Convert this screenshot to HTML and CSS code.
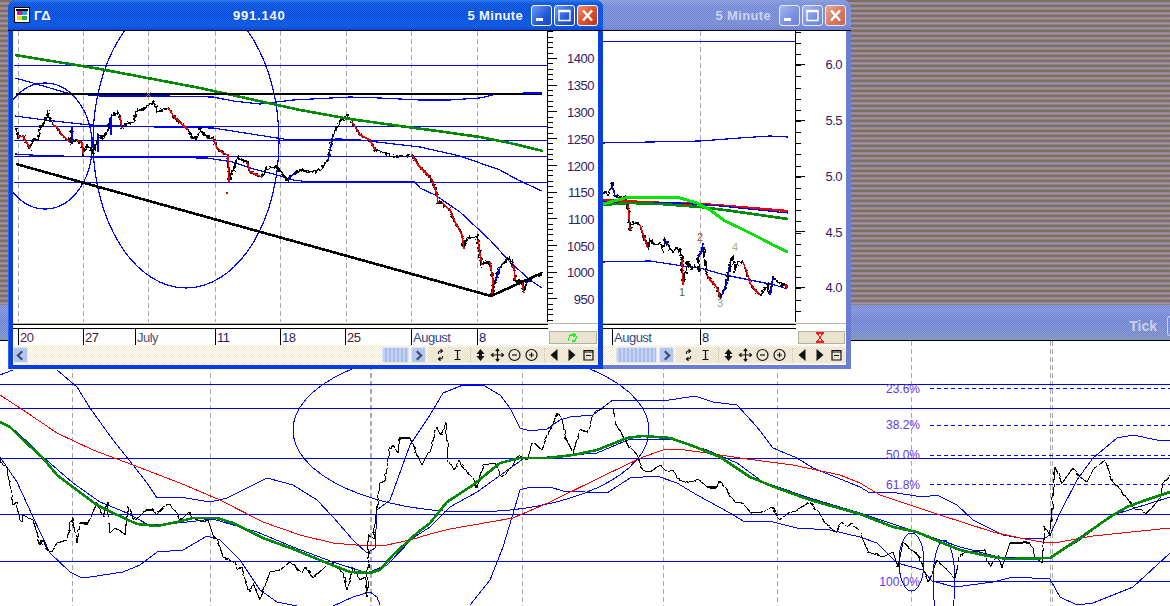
FILE: index.html
```html
<!DOCTYPE html>
<html lang="en">
<head>
<meta charset="utf-8">
<title>Charts</title>
<link rel="stylesheet" href="styles.css">
</head>
<body>
<svg class="sprite" xmlns="http://www.w3.org/2000/svg">
  <defs>
    <filter id="jag" x="-5%" y="-5%" width="110%" height="110%" color-interpolation-filters="sRGB">
      <feTurbulence type="fractalNoise" baseFrequency="0.4" numOctaves="1" seed="3"/>
      <feDisplacementMap in="SourceGraphic" scale="6" xChannelSelector="R" yChannelSelector="G"/>
    </filter>
    <filter id="jag-fine" x="-2%" y="-5%" width="104%" height="110%" color-interpolation-filters="sRGB">
      <feTurbulence type="fractalNoise" baseFrequency="0.14" numOctaves="1" seed="7"/>
      <feDisplacementMap in="SourceGraphic" scale="4" xChannelSelector="R" yChannelSelector="G"/>
    </filter>
  </defs>
  <symbol id="i-sync" viewBox="0 0 14 14"><path d="M5 6V4.5Q5 3 7 3h1M7 1.2L9 3 7 4.8M9 8v1.5Q9 11 7 11H6M7 9.2L5 11l2 1.8"/></symbol>
  <symbol id="i-cursor" viewBox="0 0 14 14"><path d="M4 2.5h6M7 2.5v9M4 11.5h6"/></symbol>
  <symbol id="i-updown" viewBox="0 0 14 14"><polygon class="solid" points="7,1 11,6 8.5,6 8.5,8 11,8 7,13 3,8 5.5,8 5.5,6 3,6"/></symbol>
  <symbol id="i-move" viewBox="0 0 14 14"><path d="M7 1v12M1 7h12M5.3 3L7 1l1.7 2M5.3 11L7 13l1.7-2M3 5.3L1 7l2 1.7M11 5.3L13 7l-2 1.7"/></symbol>
  <symbol id="i-minus" viewBox="0 0 14 14"><circle cx="7" cy="7" r="5.5"/><path d="M4.5 7h5"/></symbol>
  <symbol id="i-plus" viewBox="0 0 14 14"><circle cx="7" cy="7" r="5.5"/><path d="M4.5 7h5M7 4.5v5"/></symbol>
  <symbol id="i-left" viewBox="0 0 14 14"><polygon class="solid" points="10,1 10,13 3,7"/></symbol>
  <symbol id="i-right" viewBox="0 0 14 14"><polygon class="solid" points="4,1 4,13 11,7"/></symbol>
  <symbol id="i-box" viewBox="0 0 14 14"><path d="M2.5 2.5h9v9.5h-9zM2.5 4h9M4.5 7.5h5"/></symbol>
  <symbol id="i-winmin" viewBox="0 0 19 19"><rect class="glyph" x="4" y="12" width="7" height="3"/></symbol>
  <symbol id="i-winmax" viewBox="0 0 19 19"><path class="glyph-line" d="M4 4.5h11v10H4zM4 5.5h11"/></symbol>
  <symbol id="i-winclose" viewBox="0 0 19 19"><path class="glyph-x" d="M5 4.5l9 10M14 4.5l-9 10"/></symbol>
</svg>

<div class="desktop">
  <div class="wallpaper"></div>
  <div class="backbar"><span class="backbar-label">Tick</span><span class="backbar-btn"></span></div>
  <svg class="chart back-chart" viewBox="0 341 1170 265" xmlns="http://www.w3.org/2000/svg">
    <path class="grid" d="M72.5 341V606M210.5 341V606M370.5 341V606M371.5 341V606M522.5 341V606M663.5 341V606M777.5 341V606M911.5 341V606M1050.5 341V606M1052.5 341V606"/>
    <path class="hline" d="M0 384.5H1170M0 408.5H1170M0 458.5H1170M0 514.5H1170M0 561.5H1170M932 581.5H1170"/>
    <path class="fib" d="M930 388.5H1170M930 425.5H1170M930 455.5H1170M930 484.5H1170"/>
    <ellipse class="thin-blue" cx="471" cy="430" rx="178" ry="82"/>
    <ellipse class="thin-blue" cx="911.5" cy="562" rx="12.5" ry="29"/>
    <ellipse class="thin-blue" cx="944" cy="582" rx="11" ry="42"/>
    <polyline class="thin-blue" points="0,375 13,370"/>
    <polyline class="thin-blue" points="57,370 77,387 90,408 113,440 133,465 147,483 157,498 180,497 210,502 227,498 267,478 293,485 317,500 333,517 353,540 367,553 375,548 377,510 390,500 410,445 430,415 443,393 463,385 483,385 500,395 510,408 520,428 530,431 547,429 560,420 570,417 593,415 613,400 630,400 663,401 695,396 713,402 737,405 757,427 773,448 797,458 813,468 860,487 870,493 890,492 923,497 937,495 957,505 973,520 1003,535 1020,538 1045,538 1050,535 1060,513 1077,480 1093,458 1117,438 1133,435 1157,440 1170,441"/>
    <polyline class="thin-blue" points="0,421 17,432 43,457 73,483 100,502 127,513 147,524 167,524 187,522 213,519 257,532 293,547 333,562 367,573 387,565 413,538 430,527 450,507 477,492 523,459 547,457 597,453 630,439 670,439 707,450 737,463 763,482 810,498 860,513 917,532 960,547 1003,558 1050,557 1077,542 1113,515 1170,497"/>
    <polyline class="thin-blue" points="0,457 17,482 33,517 50,553 70,572 80,577 90,577 123,572 140,565 157,552 183,550 207,536 220,540 240,560 260,590 277,602 297,606"/>
    <polyline class="thin-blue" points="333,606 353,597 370,592 377,597 380,605"/>
    <polyline class="thin-blue" points="470,605 490,580 503,547 512,517 520,490 530,487 550,487 563,491 607,493 630,478 657,476 677,483 697,495 730,513 743,521 773,522 797,528 830,530 860,537 877,543 897,563 923,570 932,581 955,587 993,582 1013,577 1050,579 1060,597 1077,605 1093,603 1133,587 1170,553"/>
    <polyline class="thin-red" points="0,395 23,410 57,433 93,450 133,465 180,483 220,500 263,522 300,535 333,543 367,546 387,545 410,540 430,534 450,529 513,518 550,502 603,476 643,457 663,450 677,449 707,453 747,459 793,465 840,475 860,483 880,495 910,505 940,515 993,532 1020,538 1047,543 1060,542 1093,536 1170,528"/>
    <polyline class="thin-black" filter="url(#jag-fine)" points="0,457 3,465 7,467 10,487 13,505 17,502 20,520 22,522 23,515 33,520 37,533 40,545 43,540 50,553 57,543 67,540 72,517 77,543 80,523 88,523 97,503 103,517 107,503 110,533 115,528 125,535 128,507 133,518 138,520 145,510 153,510 157,515 163,507 170,505 177,513 180,520 190,513 193,518 203,522 208,520 213,535 220,547 223,557 235,562 238,570 242,567 245,580 250,592 253,583 260,600 270,572 280,570 290,562 302,573 305,567 313,578 325,567 330,562 343,573 347,590 353,567 360,580 365,577 367,598 369,535 373,540 380,483 385,480 390,450 393,445 398,452 400,438 410,438 415,450 422,465 428,453 430,452 437,427 442,435 446,423 448,460 453,470 460,460 467,473 473,477 477,488 483,465 495,463 502,477 512,467 518,455 527,460 533,442 542,450 548,435 557,413 562,420 565,435 573,453 580,430 587,433 593,415 600,408 613,410 618,428 630,448 638,457 643,470 650,472 660,465 667,472 673,470 677,478 690,483 698,479 707,487 717,487 719,480 730,495 735,502 743,503 751,513 763,512 772,507 780,520 790,513 800,508 810,502 822,517 835,533 842,522 847,527 852,523 860,532 868,552 883,557 893,552 898,567 903,542 920,557 928,583 937,560 955,578 960,557 967,552 985,550 990,567 997,555 1002,567 1010,543 1025,543 1030,543 1035,557 1042,563 1045,527 1050,535 1055,467 1062,483 1073,468 1080,477 1087,482 1093,470 1105,460 1113,482 1127,498 1133,507 1147,514 1160,498 1163,483 1170,475"/>
    <polyline class="thick-green" points="0,422 10,427 23,440 42,457 57,475 73,487 97,505 113,513 137,524 157,526 177,522 193,518 217,518 233,523 263,538 293,549 327,563 350,572 370,573 380,570 393,555 417,533 430,523 447,502 473,485 500,463 520,458 547,458 573,455 597,450 627,438 643,436 670,438 693,446 720,457 750,477 777,488 810,500 860,514 893,527 917,532 940,542 960,550 983,555 1007,559 1050,558 1077,540 1110,517 1127,507 1143,501 1170,492"/>
    <g class="fib-labels">
      <text x="920" y="393">23.6%</text>
      <text x="920" y="429">38.2%</text>
      <text x="920" y="459">50.0%</text>
      <text x="920" y="489">61.8%</text>
      <text x="920" y="586">100.0%</text>
    </g>
  </svg>

  <section class="window window-inactive">
    <header class="titlebar">
      <span class="title-period">5 Minute</span>
      <div class="title-buttons">
        <span class="winbtn"><svg><use href="#i-winmin"/></svg></span>
        <span class="winbtn"><svg><use href="#i-winmax"/></svg></span>
        <span class="winbtn winbtn-close"><svg><use href="#i-winclose"/></svg></span>
      </div>
    </header>
    <svg class="chart plot" viewBox="595 31 251 314" xmlns="http://www.w3.org/2000/svg">
      <path class="grid" d="M700.5 31V322"/>
      <path class="hline" d="M595 41.5H795"/>
      <polyline class="wide-blue" points="600,143 700,141 740,138 770,136 788,137"/>
      <polyline class="wide-blue" points="600,262 650,261 670,264 683,266 700,268 725,275 745,279 760,282 775,285 787,289"/>
      <polyline class="thick-black" filter="url(#jag)" points="595,192 604,192 608,194 612,185 615,196 625,198 628,205 629,215 630,230 633,222 640,225 645,240 648,248 650,240 655,245 660,243 663,250 665,240 668,245 672,252 678,248 680,250 682,260 683,285 685,275 688,262 692,270 695,265 700,272 698,258 702,250 703,243 705,262 707,275 710,280 715,285 718,290 720,298 722,295 724,290 726,285 730,265 733,257 735,270 738,262 743,262 746,270 750,283 755,290 760,295 763,292 767,285 770,295 773,278 778,282 782,285 785,285 788,288"/>
      <path class="thick-red" d="M628 205L629 215 630 230M640 225L645 240 648 248M682 260L683 285M707 275L710 280 715 285 718 290 720 298M743 262L746 270 750 283 755 290 760 295M785 285L788 288"/>
      <path class="thick-blue" d="M612 185L615 196M665 240L668 245M698 258L702 250 703 243M722 295L724 290 726 285 730 265M770 295L773 278"/>
      <polyline class="band-red" points="600,200 665,203 700,204 715,205 788,211"/>
      <polyline class="wide-blue" points="600,202 680,203 720,206 788,213"/>
      <polyline class="thick-green" points="600,205 630,203 660,204 700,207 725,210 788,219"/>
      <polyline class="thick-lime" points="600,205 625,198 650,197 680,198 697,203 710,210 725,221 740,228 760,238 775,246 788,252"/>
      <path class="axis" d="M795.5 31V322"/>
      <line class="tick-minor" x1="798" y1="31.7" x2="798" y2="322"/>
      <line class="tick-major" x1="800" y1="64" x2="800" y2="322"/>
      <g class="axis-labels">
        <text x="842" y="69">6.0</text>
        <text x="842" y="125">5.5</text>
        <text x="842" y="181">5.0</text>
        <text x="842" y="237">4.5</text>
        <text x="842" y="292">4.0</text>
      </g>
      <text class="mark mark-olive" x="679" y="296">1</text>
      <text class="mark mark-rust" x="697" y="241">2</text>
      <text class="mark mark-grey" x="717" y="307">3</text>
      <text class="mark mark-tan" x="732" y="251">4</text>
      <path class="rule-grey" d="M595 323.5H846"/>
      <path class="rule" d="M595 324.5H796M595 328.5H796M612.5 328V345M700.5 328V345"/>
      <text class="date date-blue" x="614" y="342">August</text>
      <text class="date date-navy" x="702" y="342">8</text>
      <rect class="status" x="798.5" y="331.5" width="46" height="12"/>
      <path class="hourglass" d="M816 333h8M816 342h8M817 333l6 9M823 333l-6 9"/>
    </svg>
    <div class="scrollrow">
      <span class="scrollbtn scrollbtn-hidden"></span>
      <span class="track"></span>
      <span class="thumb thumb-wide"></span>
      <span class="scrollbtn"><i class="chev chev-right"></i></span>
      <div class="toolbar">
        <div class="tool-group"><svg class="tool"><use href="#i-sync"/></svg><svg class="tool"><use href="#i-cursor"/></svg></div>
        <div class="tool-group"><svg class="tool"><use href="#i-updown"/></svg><svg class="tool"><use href="#i-move"/></svg><svg class="tool"><use href="#i-minus"/></svg><svg class="tool"><use href="#i-plus"/></svg></div>
        <div class="tool-group"><svg class="tool"><use href="#i-left"/></svg><svg class="tool"><use href="#i-right"/></svg><svg class="tool"><use href="#i-box"/></svg></div>
      </div>
    </div>
  </section>

  <section class="window window-active">
    <header class="titlebar">
      <svg class="appicon" viewBox="0 0 16 16" xmlns="http://www.w3.org/2000/svg">
        <rect x="0.5" y="0.5" width="15" height="15" fill="#fff" stroke="#000"/>
        <rect x="2" y="2" width="12" height="1.5" fill="#000"/>
        <rect x="3" y="4" width="5" height="4" fill="#e0109a"/>
        <rect x="8" y="4" width="5" height="4" fill="#20a0e0"/>
        <rect x="3" y="9" width="5" height="4" fill="#e8d810"/>
        <rect x="8" y="9" width="5" height="4" fill="#20b040"/>
      </svg>
      <span class="title-name">ΓΔ</span>
      <span class="title-value">991.140</span>
      <span class="title-period">5 Minute</span>
      <div class="title-buttons">
        <span class="winbtn"><svg><use href="#i-winmin"/></svg></span>
        <span class="winbtn"><svg><use href="#i-winmax"/></svg></span>
        <span class="winbtn winbtn-close"><svg><use href="#i-winclose"/></svg></span>
      </div>
    </header>
    <svg class="chart plot" viewBox="13 31 585 314" xmlns="http://www.w3.org/2000/svg">
      <path class="grid" d="M18.5 31V322M83.5 31V322M148.5 31V322M215.5 31V322M280.5 31V322M346.5 31V322M411.5 31V322M477.5 31V322"/>
      <path class="hline" d="M14 65.5H547M14 126.5H547M14 140.5H547M14 156.5H547M14 182.5H547"/>
      <ellipse class="wide-blue" cx="45" cy="146" rx="47" ry="63"/>
      <ellipse class="wide-blue" cx="186" cy="141" rx="93" ry="147"/>
      <polyline class="wide-blue" points="15,78 33,83 67,93 100,96 165,96 213,97 233,101 260,104 293,100 350,97 380,98 420,100 450,100 480,98 497,94"/>
      <polyline class="wide-blue" points="15,116 45,120 90,125 157,127 213,128 277,138 290,140 340,139 360,140 420,147 460,156 500,170 518,180 542,191"/>
      <polyline class="wide-blue" points="15,154 30,155 60,156 93,157 207,158 233,162 250,168 277,175 293,180 310,182 415,182 420,188 435,195 460,212 490,240 510,262 530,280 542,288"/>
      <polyline class="thick-black" filter="url(#jag)" points="16,128 18,137 23,136 26,142 30,148 33,139 38,140 40,128 45,122 48,113 50,120 53,125 57,127 62,135 70,142 72,127 72,142 77,140 82,143 83,153 87,145 93,152 98,135 102,138 108,132 111,117 117,112 120,117 122,128 127,123 133,123 137,110 143,110 148,105 155,103 157,112 163,110 168,108 175,118 183,125 188,130 192,137 197,138 200,130 207,137 213,138 217,148 223,153 228,155 229,182 232,172 238,158 247,162 250,172 262,177 267,168 277,167 287,180 295,173 300,170 310,172 320,170 328,160 333,135 340,122 347,115 352,122 360,135 370,140 375,150 385,153 395,157 412,155 418,165 428,175 432,180 437,195 438,203 442,203 450,210 452,215 455,222 462,235 464,249 466,240 470,237 474,238 477,236 478,240 480,255 482,265 486,262 490,262 493,280 492,296 495,282 500,267 505,262 507,260 510,258 512,265 514,268 515,280 518,283 520,280 522,282 524,293 526,283 530,280 535,276 542,273"/>
      <path class="thick-red" d="M18 137L23 136 26 142 30 148M53 125L57 127 62 135 70 142M77 140L82 143 83 153M120 117L122 128M168 108L175 118 183 125 188 130M213 138L217 148 223 153 228 155 229 182M247 162L250 172 262 177M352 122L360 135 370 140 375 150M412 155L418 165 428 175 432 180 437 195 438 203M442 203L450 210 452 215 455 222 462 235 464 249M478 240L480 255 482 265M490 262L493 280 492 296M512 265L514 268 515 280M522 282L524 293"/>
      <path class="thick-blue" d="M72 127L72 142M98 135L98 152M111 117L111 135M287 180L295 173M328 160L333 135M495 282L500 267M526 283L530 280"/>
      <path class="red-dot" d="M226 192h2v2h-2z"/>
      <polyline class="thick-green" points="15,55 100,69 200,88 300,110 350,119 400,126 430,130 480,137 510,143 543,151"/>
      <path class="heavy-black" d="M16 94H542M16 164L491 296L542 273"/>
      <polyline class="wide-blue" points="523,93 542,93"/>
      <path class="mark-x" d="M146 92l5 5M151 92l-5 5"/>
      <path class="axis" d="M547.5 31V322"/>
      <line class="tick-minor" x1="550" y1="31.3" x2="550" y2="322"/>
      <line class="tick-major" x1="552" y1="58" x2="552" y2="322"/>
      <g class="axis-labels">
        <text x="594" y="63">1400</text>
        <text x="594" y="90">1350</text>
        <text x="594" y="117">1300</text>
        <text x="594" y="144">1250</text>
        <text x="594" y="171">1200</text>
        <text x="594" y="197">1150</text>
        <text x="594" y="224">1100</text>
        <text x="594" y="251">1050</text>
        <text x="594" y="277">1000</text>
        <text x="594" y="304">950</text>
      </g>
      <path class="rule-grey" d="M13 323.5H598"/>
      <path class="rule" d="M13 324.5H548M13 328.5H548M18.5 328V345M83.5 328V345M135.5 328V345M215.5 328V345M280.5 328V345M345.5 328V345M411.5 328V345M477.5 328V345"/>
      <text class="date date-maroon" x="20" y="342">20</text>
      <text class="date date-dark" x="85" y="342">27</text>
      <text class="date date-slate" x="137" y="342">July</text>
      <text class="date date-navy" x="217" y="342">11</text>
      <text class="date date-purple" x="282" y="342">18</text>
      <text class="date date-dark" x="347" y="342">25</text>
      <text class="date date-blue" x="413" y="342">August</text>
      <text class="date date-navy" x="479" y="342">8</text>
      <rect class="status" x="549.5" y="331.5" width="47" height="12"/>
      <path class="signal" d="M568 341l2-6h4M573 333l3 2-3 2M572 341h3l2-5"/>
    </svg>
    <div class="scrollrow">
      <span class="scrollbtn"><i class="chev chev-left"></i></span>
      <span class="track"></span>
      <span class="thumb"></span>
      <span class="scrollbtn"><i class="chev chev-right"></i></span>
      <div class="toolbar">
        <div class="tool-group"><svg class="tool"><use href="#i-sync"/></svg><svg class="tool"><use href="#i-cursor"/></svg></div>
        <div class="tool-group"><svg class="tool"><use href="#i-updown"/></svg><svg class="tool"><use href="#i-move"/></svg><svg class="tool"><use href="#i-minus"/></svg><svg class="tool"><use href="#i-plus"/></svg></div>
        <div class="tool-group"><svg class="tool"><use href="#i-left"/></svg><svg class="tool"><use href="#i-right"/></svg><svg class="tool"><use href="#i-box"/></svg></div>
      </div>
    </div>
  </section>
</div>
</body>
</html>
```

FILE: styles.css
```css
* { box-sizing: border-box; }
html, body { margin: 0; padding: 0; }
body { width: 1170px; height: 606px; overflow: hidden; background: #fff; font-family: "Liberation Sans", Arial, sans-serif; }
.sprite { position: absolute; width: 0; height: 0; overflow: hidden; }
.desktop { position: relative; width: 1170px; height: 606px; display: flex; flex-direction: column; overflow: hidden; }

/* Back window: dithered wallpaper, faded bar and the large chart */
.wallpaper {
  flex: 0 0 305px;
  background:
    repeating-conic-gradient(rgba(170,70,190,.16) 0 25%, rgba(130,120,90,.1) 0 50%) 0 0 / 2px 2px,
    repeating-linear-gradient(180deg, #75755c 0 2px, #938bb0 2px 3px, #ab988f 3px 4px, #8a8a76 4px 5px);
}
.backbar {
  flex: 0 0 36px;
  display: flex;
  align-items: center;
  justify-content: flex-end;
  padding-top: 6px;
  border-bottom: 1px solid #000;
  background:
    repeating-conic-gradient(rgba(255,255,255,.1) 0 25%, rgba(60,60,40,.1) 0 50%) 0 0 / 2px 2px,
    linear-gradient(180deg, #7a92e6 0, #8294e4 14%, #7689de 45%, #7d92d4 85%, #7f9ac4 100%);
}
.backbar-label { font-size: 14px; font-weight: 700; color: #c6d2ec; margin-right: 10px; }
.backbar-btn { width: 3px; height: 20px; border: 1px solid #c6d2ec; border-right: 0; border-radius: 3px 0 0 3px; }

.chart { display: block; shape-rendering: crispEdges; }
.chart polyline, .chart path, .chart ellipse, .chart line { fill: none; }
.back-chart { width: 1170px; height: 265px; flex: 0 0 265px; background: #fff; }

.grid { stroke: #a9a9a9; stroke-width: 1; stroke-dasharray: 5 3; }
.hline { stroke: #0000f0; stroke-width: 1; }
.fib { stroke: #0000f0; stroke-width: 1; stroke-dasharray: 4 3; }
.thin-blue { stroke: #0000f0; stroke-width: 1; }
.wide-blue { stroke: #0000f0; stroke-width: 1.2; }
.thin-red { stroke: #f00000; stroke-width: 1; }
.thin-black { stroke: #000; stroke-width: 1.1; }
.thick-black { stroke: #000; stroke-width: 2; }
.thick-red { stroke: #f00000; stroke-width: 1.5; }
.band-red { stroke: #f00000; stroke-width: 2.4; }
.thick-blue { stroke: #0000f0; stroke-width: 1.5; }
.thick-green { stroke: #008a00; stroke-width: 2.6; }
.thick-lime { stroke: #00e600; stroke-width: 3; }
.heavy-black { stroke: #000; stroke-width: 2.6; }
.chart .red-dot { fill: #c01010; }
.mark-x { stroke: #c06a30; stroke-width: 1; }
.axis { stroke: #000; stroke-width: 1; }
.tick-minor { stroke: #000; stroke-width: 5; stroke-dasharray: 1 4.34; }
.tick-major { stroke: #000; stroke-width: 9; stroke-dasharray: 1 25.7; }
.window-inactive .tick-minor { stroke-dasharray: 1 10.16; }
.window-inactive .tick-major { stroke-dasharray: 1 54.8; }
.rule { stroke: #000; stroke-width: 1; }
.rule-grey { stroke: #b8b8a8; stroke-width: 1; }
.fib-labels text { font-size: 12px; fill: #5a3be6; text-anchor: end; }
.axis-labels text { font-size: 13px; letter-spacing: -.5px; fill: #33205e; text-anchor: end; }
.date { font-size: 13px; letter-spacing: -.5px; }
.date-maroon { fill: #5c1838; }
.date-dark { fill: #402030; }
.date-slate { fill: #505070; }
.date-navy { fill: #20206a; }
.date-purple { fill: #40207a; }
.date-blue { fill: #304a88; }
.mark { font-size: 11px; }
.mark-olive { fill: #5a6a20; }
.mark-rust { fill: #a04a30; }
.mark-grey { fill: #a0a0a0; }
.mark-tan { fill: #c0a878; }
.status { fill: #e8e4d0; stroke: #b4b09c; stroke-width: 1; }
.signal { stroke: #22ee22; stroke-width: 1.2; }
.hourglass { stroke: #f02020; stroke-width: 1.2; }

/* Floating windows */
.window { position: absolute; top: 0; height: 369px; display: flex; flex-direction: column; border-radius: 8px 8px 0 0; overflow: hidden; }
.window-active { left: 8px; width: 595px; padding: 0 5px 4px; background: #0a3ede; box-shadow: inset 1px 0 #2a66e8; }
.window-inactive { left: 590px; width: 261px; padding: 0 5px 4px; background: #6a7dd2; }
.titlebar { flex: 0 0 31px; display: flex; align-items: center; color: #f2f5ff; font-size: 13px; font-weight: 700; letter-spacing: .8px; border-bottom: 1px solid #000; margin: 0 -5px; padding: 0 5px 0 6px; }
.window-active .titlebar {
  background:
    repeating-conic-gradient(rgba(255,255,255,.06) 0 25%, rgba(0,0,60,.06) 0 50%) 0 0 / 2px 2px,
    linear-gradient(180deg, #2a7af0 0, #0c58e4 12%, #0a52e2 50%, #0a5ae8 85%, #0a46d8 100%);
}
.window-inactive .titlebar {
  color: #c9d4f2;
  justify-content: flex-end;
  background:
    repeating-conic-gradient(rgba(255,255,255,.07) 0 25%, rgba(60,60,40,.08) 0 50%) 0 0 / 2px 2px,
    linear-gradient(180deg, #8aa0e4 0, #7b90de 20%, #7c8fdc 80%, #7084d6 100%);
}
.appicon { flex: 0 0 16px; width: 16px; height: 16px; shape-rendering: crispEdges; }
.title-name { margin-left: 4px; flex: 0 0 199px; }
.title-value { flex: 0 0 52px; white-space: nowrap; }
.title-period { margin-left: auto; white-space: nowrap; letter-spacing: .35px; }
.title-buttons { display: flex; gap: 2px; margin-left: 8px; }
.winbtn { display: block; width: 21px; height: 21px; margin-top: 1px; border: 1px solid #fff; border-radius: 3px; background: linear-gradient(135deg, #6c9cf4 0, #2458dc 60%, #1c46c8 100%); overflow: hidden; }
.winbtn-close { background: linear-gradient(135deg, #ee9070 0, #d8502e 55%, #b83418 100%); }
.window-inactive .winbtn { background: linear-gradient(135deg, #a4b6ee 0, #7a90e0 60%, #6f84d8 100%); border-color: #e6ebfa; }
.window-inactive .winbtn-close { background: linear-gradient(135deg, #e8a890 0, #d4785c 60%, #c86848 100%); }
.winbtn svg { display: block; width: 19px; height: 19px; }

.plot { width: 100%; height: 314px; flex: 0 0 314px; background: #fff; }
.window-active .plot { width: 585px; }
.window-inactive .plot { width: 251px; }

.scrollrow { flex: 1; display: flex; align-items: stretch; padding: 2px 0; background: repeating-conic-gradient(#f3ead2 0 25%, #fff 0 50%) 0 0 / 2px 2px; }
.scrollbtn { flex: 0 0 15px; display: flex; align-items: center; justify-content: center; margin-left: 2px; background: #b4c6ee; border: 1px solid #dfe6f6; border-radius: 2px; }
.scrollbtn:first-child { margin-left: 0; }
.scrollbtn-hidden { visibility: hidden; }
.track { flex: 1; }
.thumb { flex: 0 0 27px; background: repeating-linear-gradient(90deg, #c4d2f2 0 2px, #a9bcec 2px 4px); border: 1px solid #dbe3f6; border-radius: 2px; }
.thumb-wide { flex-basis: 41px; }
.chev { display: block; width: 7px; height: 7px; border-left: 2px solid #3a4a78; border-bottom: 2px solid #3a4a78; }
.chev-left { transform: rotate(45deg); margin-left: 2px; }
.chev-right { transform: rotate(225deg); margin-right: 2px; }
.toolbar { flex: 0 0 170px; display: flex; align-items: center; gap: 4px; margin-left: 2px; padding-left: 4px; background: rgba(226,218,190,.45); }
.tool-group { display: flex; align-items: center; }
.tool-group + .tool-group { border-left: 1px dotted #c8c0a4; padding-left: 1px; }
.tool { display: block; width: 17px; height: 14px; }
.sprite symbol path, .sprite symbol circle { fill: none; stroke: #111; stroke-width: 1.2; }
.sprite symbol .solid { fill: #111; stroke: none; }
.sprite symbol .glyph { fill: #fff; stroke: none; }
.sprite symbol .glyph-line { fill: none; stroke: #fff; stroke-width: 1.4; }
.sprite symbol .glyph-x { fill: none; stroke: #fff; stroke-width: 2.4; }
```
